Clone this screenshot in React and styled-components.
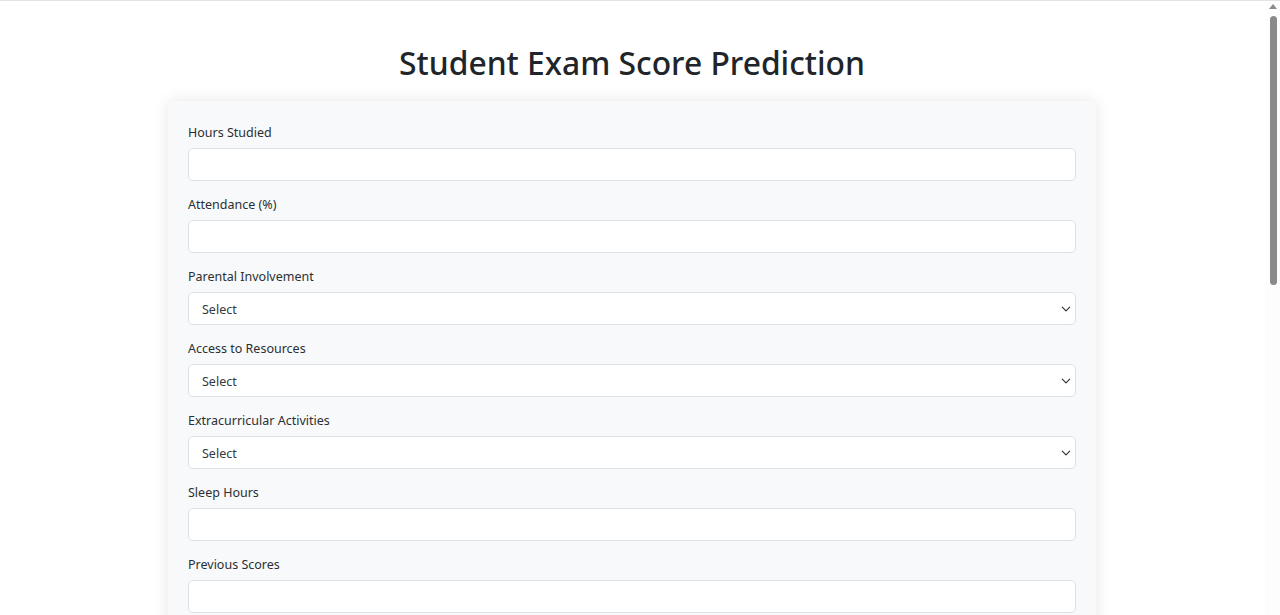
import styled, { createGlobalStyle } from 'styled-components';

const GlobalStyle = createGlobalStyle`
  * {
    box-sizing: border-box;
  }

  body {
    margin: 0;
    background: #ffffff;
    color: #212529;
    font-family: "Noto Sans", "Open Sans", sans-serif;
  }
`;

const Viewport = styled.div`
  min-height: 100vh;
  padding-right: 16px;
  border-top: 1px solid #e3e3e3;
`;

const ScrollRail = styled.div`
  position: fixed;
  top: 1px;
  right: 0;
  bottom: 0;
  width: 15px;
  display: flex;
  flex-direction: column;
  align-items: center;
  padding-top: 3px;
  background: #fdfdfd;
`;

const ScrollArrow = styled.div`
  width: 0;
  height: 0;
  border-left: 4px solid transparent;
  border-right: 4px solid transparent;
  border-bottom: 5px solid #8a8a8a;
`;

const ScrollThumb = styled.div`
  width: 7px;
  height: 269px;
  margin-top: 7px;
  margin-left: 1px;
  background: #8a8a8a;
  border-radius: 4px;
`;

const Page = styled.div`
  padding: 0 0 48px;
`;

const Title = styled.h1`
  margin: 38px 0 14px;
  text-align: center;
  font-size: 31.8px;
  font-weight: 500;
  line-height: 48px;
  color: #212529;
`;

const Card = styled.form`
  width: 928px;
  margin: 0 auto;
  padding: 21px 20px 20px;
  background: #f8f9fa;
  border-radius: 8px;
  box-shadow: 0 0 16px rgba(0, 0, 0, 0.1);
`;

const Group = styled.div`
  margin-bottom: 13px;
`;

const Label = styled.label`
  display: block;
  margin-bottom: 5px;
  font-size: 12.5px;
  line-height: 21px;
  color: #2b2f33;
`;

const Input = styled.input`
  display: block;
  width: 100%;
  height: 33px;
  padding: 0 12px;
  background: #ffffff;
  border: 1px solid #dee2e6;
  border-radius: 5px;
  font-family: inherit;
  font-size: 13px;
  color: #212529;
  outline: none;
`;

const SelectWrap = styled.div`
  position: relative;
`;

const Select = styled.select`
  display: block;
  width: 100%;
  height: 33px;
  padding: 1px 32px 0 13px;
  background: #ffffff;
  border: 1px solid #dee2e6;
  border-radius: 5px;
  font-family: inherit;
  font-size: 12.5px;
  color: #343a40;
  appearance: none;
  outline: none;
`;

const Chevron = styled.svg`
  position: absolute;
  right: 5px;
  top: 12px;
  width: 10px;
  height: 10px;
  pointer-events: none;
`;

const Button = styled.button`
  display: block;
  width: 100%;
  height: 36px;
  margin-top: 8px;
  background: #0d6efd;
  border: 1px solid #0d6efd;
  border-radius: 5px;
  color: #ffffff;
  font-family: inherit;
  font-size: 14px;
`;

const fields = [
  { label: 'Hours Studied' },
  { label: 'Attendance (%)' },
  { label: 'Parental Involvement', options: ['Low', 'Medium', 'High'] },
  { label: 'Access to Resources', options: ['Low', 'Medium', 'High'] },
  { label: 'Extracurricular Activities', options: ['Yes', 'No'] },
  { label: 'Sleep Hours' },
  { label: 'Previous Scores' },
  { label: 'Motivation Level', options: ['Low', 'Medium', 'High'] },
  { label: 'Internet Access', options: ['Yes', 'No'] },
  { label: 'Tutoring Sessions' },
  { label: 'Family Income', options: ['Low', 'Medium', 'High'] },
  { label: 'Teacher Quality', options: ['Low', 'Medium', 'High'] },
  { label: 'School Type', options: ['Public', 'Private'] },
  { label: 'Physical Activity' },
  { label: 'Gender', options: ['Male', 'Female'] },
];

const SelectField = ({ options }) => (
  <SelectWrap>
    <Select defaultValue="">
      <option value="">Select</option>
      {options.map((opt) => (
        <option key={opt} value={opt}>{opt}</option>
      ))}
    </Select>
    <Chevron viewBox="0 0 16 16">
      <path d="m2 5 6 6 6-6" fill="none" stroke="#343a40" strokeWidth="2" strokeLinecap="round" strokeLinejoin="round" />
    </Chevron>
  </SelectWrap>
);

const App = () => (
  <Viewport>
    <GlobalStyle />
    <Page>
      <Title>Student Exam Score Prediction</Title>
      <Card onSubmit={(e) => e.preventDefault()}>
        {fields.map((field) => (
          <Group key={field.label}>
            <Label>{field.label}</Label>
            {field.options ? <SelectField options={field.options} /> : <Input type="number" />}
          </Group>
        ))}
        <Button type="submit">Predict Score</Button>
      </Card>
    </Page>
    <ScrollRail aria-hidden="true">
      <ScrollArrow />
      <ScrollThumb />
    </ScrollRail>
  </Viewport>
);

export default App;
